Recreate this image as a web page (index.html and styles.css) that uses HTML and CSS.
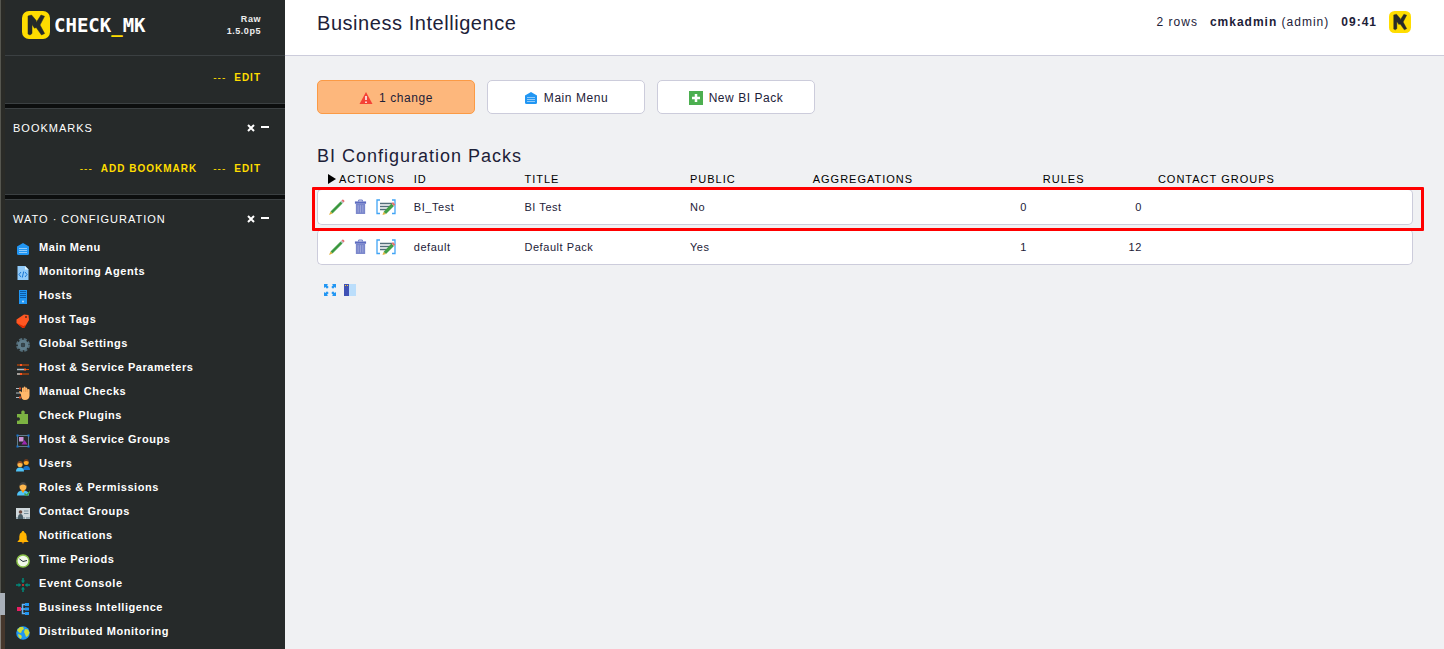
FILE: index.html
```html
<!DOCTYPE html>
<html lang="en">
<head>
<meta charset="utf-8">
<title>Business Intelligence</title>
<link rel="stylesheet" href="styles.css">
</head>
<body>
<svg class="defs" width="0" height="0" aria-hidden="true">
  <symbol id="logo" viewBox="0 0 28 28">
    <rect width="28" height="28" rx="7" fill="#ffdd00"/>
    <path d="M6 5 9.500 4 14.200 9.500V16.500L12.500 17.200 10 13.500V22.500L8 24 6 23zM19 4 22.500 5.300 18 14 22.600 22.500 19.500 24 14.200 16.500V11.500z" fill="#262a2a" stroke="#262a2a" stroke-width=".5" stroke-linejoin="round"/>
  </symbol>
  <symbol id="home" viewBox="0 0 14 14">
    <path d="M7 1 13 4.500V11.500Q13 13 11.500 13H2.500Q1 13 1 11.500V4.500z" fill="#2196f3"/>
    <path d="M3 6.500h8M3 8.500h8M3 10.500h8" stroke="#90caf9"/>
  </symbol>
  <symbol id="pencil" viewBox="0 0 16 16">
    <path d="M1.500 12.500 11.500 2.500 13.500 4.500 3.500 14.500z" fill="#43a047"/>
    <path d="M2.500 13.500 12.500 3.500" stroke="#388e3c"/>
    <path d="M11.500 2.500 12.500 1.500 14.500 3.500 13.500 4.500z" fill="#b0bec5"/>
    <path d="M12.500 1.500 13.500.5Q15.500.5 15.500 2.500L14.500 3.500z" fill="#e57373"/>
    <path d="M1.500 12.500 3.500 14.500 0 16z" fill="#e0b23c"/>
  </symbol>
  <symbol id="trash" viewBox="0 0 14 16">
    <path d="M5 2V.5h4V2" fill="none" stroke="#5c6bc0"/>
    <path d="M1 2h12v2.500H1z" fill="#5c6bc0"/>
    <path d="M2 4.500h10v11H2z" fill="#7986cb"/>
    <path d="M4.500 6v8M7 6v8M9.500 6v8" stroke="#9fa8da"/>
  </symbol>
  <symbol id="rules" viewBox="0 0 20 16">
    <path d="M4 1H1v13.500h3M16 1h3v13.500h-3" fill="none" stroke="#42a5f5" stroke-width="1.300"/>
    <path d="M4 4.500h12M4 7.500h11M4 10.500h8" stroke="#546e7a" stroke-width="1.600"/>
    <path d="M7.500 13 15.500 4.500 18 7 10 15z" fill="#43a047"/>
    <path d="M15.500 4.500 17 3 19.300 5.500 18 7z" fill="#e57373"/>
    <path d="M7.500 13 10 15 6.500 16z" fill="#e0b23c"/>
  </symbol>
</svg>

<div class="layout">
  <div class="edge"><span class="edge-top"></span><span class="edge-thumb"></span><span class="edge-bottom"></span></div>
  <aside class="sidebar">
    <header class="brand">
      <a class="brand-link" href="#"><svg class="logo-large" aria-hidden="true"><use href="#logo"/></svg><span>CHECK<b>_</b>MK</span></a>
      <div class="version">Raw<br>1.5.0p5</div>
    </header>
    <div class="snapins">
      <section class="snapin snapin-bare">
        <nav class="links"><a href="#">EDIT</a></nav>
      </section>
      <section class="snapin snapin-bookmarks">
        <header class="snapin-head"><h2>BOOKMARKS</h2>
          <button aria-label="Remove"><svg viewBox="0 0 8 8"><path d="M1 1 7 7M7 1 1 7"/></svg></button>
          <button aria-label="Collapse"><svg viewBox="0 0 8 8"><path d="M0 3h8"/></svg></button>
        </header>
        <nav class="links"><a href="#">ADD BOOKMARK</a><a href="#">EDIT</a></nav>
      </section>
      <section class="snapin snapin-wato">
        <header class="snapin-head"><h2>WATO · CONFIGURATION</h2>
          <button aria-label="Remove"><svg viewBox="0 0 8 8"><path d="M1 1 7 7M7 1 1 7"/></svg></button>
          <button aria-label="Collapse"><svg viewBox="0 0 8 8"><path d="M0 3h8"/></svg></button>
        </header>
        <nav class="menu">
          <a href="#"><svg viewBox="0 0 14 14"><use href="#home"/></svg>Main Menu</a>
          <a href="#"><svg viewBox="0 0 14 14"><path d="M1.500 0H9l3.500 3.500V14h-11z" fill="#90caf9"/><path d="M9 0v3.500h3.500z" fill="#e1f5fe"/><path d="M5 6 3 8.500 5 11M9 6l2 2.500L9 11M7.700 5.500 6.300 11.500" fill="none" stroke="#1976d2"/></svg>Monitoring Agents</a>
          <a href="#"><svg viewBox="0 0 14 14"><path d="M3 0h8v14H3z" fill="#2196f3"/><path d="M4 1.500h6M4 3.500h6M4 5.500h6M4 7.500h6" stroke="#0d5ba5"/><circle cx="7" cy="11.500" r="1" fill="#bbdefb"/></svg>Hosts</a>
          <a href="#"><svg viewBox="0 0 14 14"><path d="M.5 5.500 8 .5l4.500.5.500 5-4.500 7.500Q7 14.500 6 13.500L.5 9z" fill="#ff5722"/><path d="M.5 9 6 13.500q1 .8 2.500 0L10.500 10.500 7.500 12z" fill="#dd2c00"/><circle cx="10" cy="3" r="1" fill="#5d2a1a"/></svg>Host Tags</a>
          <a href="#"><svg viewBox="0 0 14 14"><circle cx="7" cy="7" r="5.700" fill="none" stroke="#546e7a" stroke-width="2.500" stroke-dasharray="3 1.480"/><circle cx="7" cy="7" r="3.700" fill="none" stroke="#607d8b" stroke-width="3"/><circle cx="7" cy="7" r="2" fill="#37474f"/></svg>Global Settings</a>
          <a href="#"><svg viewBox="0 0 14 14"><path d="M1 3h12M1 12h12" stroke="#e65100"/><path d="M1 7.500h7M1 12h3" stroke="#b0bec5" stroke-width="1.500"/><path d="M9 7.500h4" stroke="#e65100"/><path d="M4 2h2v2H4zM8 6.500h2v2H8zM4 11h2v2H4z" fill="#ff5722"/></svg>Host &amp; Service Parameters</a>
          <a href="#"><svg viewBox="0 0 14 14"><path d="M0 2.500h5M0 7h4M0 11.500h5" stroke="#b0bec5"/><path d="M3 1.500h2v2H3zM3 10.500h2v2H3z" fill="#dd4b20"/><path d="M5 8.500 3 6Q3.500 4.500 5 5.500L6 6.500V2q.8-1 1.700 0V1q.9-1 1.800 0v1q.9-1 1.700 0v1.500q1.500-.8 2.300 0V10q-.5 4-4.500 4T5 8.500z" fill="#ffb86b"/><path d="M7.700 2v4M9.500 2v4M11.200 3v3" stroke="#d98b45" stroke-width=".5"/></svg>Manual Checks</a>
          <a href="#"><svg viewBox="0 0 14 14"><path d="M1 4h4.500Q4.500.5 7 .5T8.500 4H12v10H1v-3.500q3 .8 3-1.500T1 7.500z" fill="#7cb342"/></svg>Check Plugins</a>
          <a href="#"><svg viewBox="0 0 14 14"><path d="M1.500 1.500h11v11h-11z" fill="none" stroke="#607d8b"/><path d="M3 3h4.500v4.500H3z" fill="#ce93d8"/><path d="M5.500 10.500 8.500 6l3 4.500z" fill="#9c27b0"/><path d="M.5.5h2v2h-2zM11.500.5h2v2h-2zM.5 11.500h2v2h-2zM11.500 11.500h2v2h-2z" fill="#1976d2"/></svg>Host &amp; Service Groups</a>
          <a href="#"><svg viewBox="0 0 14 14"><path d="M7 12q0-4 3.500-4t3.500 4z" fill="#1976d2"/><circle cx="10.200" cy="4.500" r="2.500" fill="#ffa726"/><path d="M7.700 4q0-3 2.500-3t2.500 3q-2.500-2-5 0z" fill="#6d3b1f"/><path d="M0 13.500Q0 9.500 4 9.500t4 4z" fill="#4fc3f7"/><circle cx="4" cy="6.500" r="2.600" fill="#ffb74d"/><path d="M1.400 6q0-3 2.600-3t2.600 3Q4 4 1.400 6z" fill="#8d4b24"/></svg>Users</a>
          <a href="#"><svg viewBox="0 0 14 14"><path d="M1 13.500q0-5 6-5t6 5z" fill="#4fc3f7"/><path d="M5 8h4l-2 3z" fill="#ff9800"/><circle cx="7" cy="4.800" r="3.500" fill="#ffb74d"/><path d="M3.500 4.500q0-4.500 3.500-4.500t3.500 4.500q-1-2-3.500-2t-3.500 2z" fill="#424242"/><path d="m8.500 11.500 2 2 3.500-4" fill="none" stroke="#43a047" stroke-width="1.500"/></svg>Roles &amp; Permissions</a>
          <a href="#"><svg viewBox="0 0 14 14"><path d="M0 2h14v11H0z" fill="#cfd8dc"/><path d="M2 11.500q0-3.500 2.500-3.500T7 11.500V13H2z" fill="#455a64"/><circle cx="4.500" cy="6" r="1.800" fill="#6d4c41"/><path d="M8 5h4.500M8 7.500h4.500" stroke="#78909c"/><path d="M1 13v-2M8 13v-2M11 13v-2M13 13v-2" stroke="#607d8b"/></svg>Contact Groups</a>
          <a href="#"><svg viewBox="0 0 14 14"><path d="M7 1q1.300 0 1.300 1.300Q10.700 3.300 10.700 6.500v3l2 2.500H1.300l2-2.500v-3q0-3.200 2.400-4.200Q5.700 1 7 1z" fill="#ffb300"/><path d="M5.500 12.300h3q-1.500 2.500-3 0z" fill="#ff8f00"/></svg>Notifications</a>
          <a href="#"><svg viewBox="0 0 14 14"><circle cx="7" cy="7" r="6.100" fill="#f1f8e9" stroke="#8bc34a" stroke-width="1.500"/><path d="M3.500 5 7 7.500l4-1" fill="none" stroke="#263238"/></svg>Time Periods</a>
          <a href="#"><svg viewBox="0 0 14 14"><path d="M7 0v4M7 10v4M0 7h4M10 7h4" stroke="#00897b" stroke-width="1.500"/><path d="m5 2.500 2 3 2-3zM5 11.500l2-3 2 3zM2.500 5l3 2-3 2zM11.500 5l-3 2 3 2z" fill="#00897b"/><circle cx="7" cy="7" r="1" fill="#e53935"/></svg>Event Console</a>
          <a href="#"><svg viewBox="0 0 14 14"><path d="M4 7h6M9.500 2.500H6.500v9h3" fill="none" stroke="#64b5f6" stroke-width="1.500"/><path d="M1 5h4v4H1z" fill="#e91e63"/><path d="M9 1h4v3H9zM9 5.500h4v3H9zM9 10h4v3H9z" fill="#2196f3"/></svg>Business Intelligence</a>
          <a href="#"><svg viewBox="0 0 14 14"><circle cx="7" cy="7" r="6.800" fill="#2196f3"/><path d="M1 4 4 1l3 0 1 2-2 1.500L5 7 3 6.500zM2 8l3 1 1 2-1.500 2Q2 11.500 2 8zM9 3l3 .5 1.500 3L12 10l-2 1-1-3-1-2z" fill="#cddc39"/></svg>Distributed Monitoring</a>
        </nav>
      </section>
    </div>
  </aside>

  <div class="page">
    <header class="topbar">
      <h1>Business Intelligence</h1>
      <div class="status"><span>2 rows</span><span><b>cmkadmin</b> (admin)</span><b>09:41</b><svg class="logo-small" aria-hidden="true"><use href="#logo"/></svg></div>
    </header>
    <main>
      <div class="actions">
        <button class="changes"><svg viewBox="0 0 14 14"><path d="M7 1 13.500 13H.5z" fill="#f44336"/><path d="M7 5v4M7 10.500V12" stroke="#fff" stroke-width="1.500"/></svg>1 change</button>
        <button><svg viewBox="0 0 14 14"><use href="#home"/></svg>Main Menu</button>
        <button><svg viewBox="0 0 14 14"><path d="M0 0h14v14H0z" fill="#4caf50"/><path d="M7 3v8M3 7h8" stroke="#fff" stroke-width="2.500"/></svg>New BI Pack</button>
      </div>
      <h2 class="table-title">BI Configuration Packs</h2>
      <table class="packs">
        <colgroup><col class="c-actions"><col class="c-id"><col class="c-title"><col class="c-public"><col class="c-aggr"><col class="c-rules"><col class="c-groups"></colgroup>
        <thead><tr><th><span class="fold"><svg viewBox="0 0 8 10"><path d="M0 0 8 5 0 10z"/></svg>ACTIONS</span></th><th>ID</th><th>TITLE</th><th>PUBLIC</th><th>AGGREGATIONS</th><th>RULES</th><th>CONTACT GROUPS</th></tr></thead>
        <tbody>
          <tr class="marked">
            <td><div class="tools"><a href="#" aria-label="Edit"><svg class="i-pencil"><use href="#pencil"/></svg></a><a href="#" aria-label="Delete"><svg class="i-trash"><use href="#trash"/></svg></a><a href="#" aria-label="Rules"><svg class="i-rules"><use href="#rules"/></svg></a></div></td>
            <td>BI_Test</td><td>BI Test</td><td>No</td><td class="num">0</td><td class="num">0</td><td></td>
          </tr>
          <tr>
            <td><div class="tools"><a href="#" aria-label="Edit"><svg class="i-pencil"><use href="#pencil"/></svg></a><a href="#" aria-label="Delete"><svg class="i-trash"><use href="#trash"/></svg></a><a href="#" aria-label="Rules"><svg class="i-rules"><use href="#rules"/></svg></a></div></td>
            <td>default</td><td>Default Pack</td><td>Yes</td><td class="num">1</td><td class="num">12</td><td></td>
          </tr>
        </tbody>
      </table>
      <footer class="view-tools">
        <button aria-label="Full screen"><svg viewBox="0 0 14 14"><path d="M1 1h4L4 2.300 5.700 4 4 5.700 2.300 4 1 5zM13 1v4L11.700 4 10 5.700 8.300 4 10 2.300 9 1zM1 13V9l1.300 1L4 8.300 5.700 10 4 11.700 5 13zM13 13H9l1-1.300L8.300 10 10 8.300 11.700 10 13 9z" fill="#2196f3"/></svg></button>
        <button aria-label="Toggle sidebar"><svg viewBox="0 0 14 14"><path d="M1 1h12v12H1z" fill="#bbdefb"/><path d="M1 1h5v12H1z" fill="#3f51b5"/><path d="M2 2h1v1H2zM4 2h1v1H4z" fill="#ffca28"/></svg></button>
      </footer>
    </main>
  </div>
</div>
</body>
</html>
```
FILE: styles.css
```css
* { box-sizing: border-box; }
body {
  margin: 0;
  background: #f0f1f3;
  color: #1d2138;
  font: 11px/16px "Liberation Sans", Arial, sans-serif;
  letter-spacing: 0.05em;
}
a { color: inherit; text-decoration: none; }
button { border: 0; padding: 0; background: none; font: inherit; letter-spacing: inherit; color: inherit; cursor: pointer; }
svg { display: block; flex: none; }
h1, h2 { margin: 0; font-weight: normal; }
.defs { position: absolute; }

.layout { display: flex; min-height: 100vh; }
.edge { display: flex; flex-direction: column; width: 5px; background: #2a2b27; }
.edge-top { flex: 593; border-left: 1px solid #55564f; }
.edge-thumb { flex: 22; background: #a9b0b9; }
.edge-bottom { flex: 34; background: #46372c; border-left: 1px solid #85807a; }

.sidebar { width: 280px; flex: none; background: #262a2a; color: #fff; }
.brand { display: flex; justify-content: space-between; align-items: center; height: 55px; padding: 0 24px 6px 17px; }
.brand-link { display: flex; align-items: center; gap: 4px; font: bold 19px/28px "DejaVu Sans Mono", monospace; letter-spacing: 0; }
.brand-link b { color: #ffdd00; }
.logo-large { width: 28px; height: 28px; }
.version { font-size: 9px; line-height: 12px; font-weight: bold; text-align: right; color: #eee; }
.snapins { display: flex; flex-direction: column; gap: 4px; background: #0c0e0e; }
.snapin { background: #262a2a; border: solid #3b4042; border-width: 1px 0; }
.snapin-bare { padding: 14px 0 17px; }
.snapin-bookmarks { padding: 11px 0 17px; }
.snapin-wato { padding: 11px 0 6px; border-bottom: 0; }
.snapin-head { display: flex; align-items: center; gap: 6px; padding: 0 16px 0 8px; }
.snapin-head h2 { flex: 1; font-size: 11px; line-height: 16px; letter-spacing: 1px; color: #fff; }
.snapin-head svg { width: 8px; height: 8px; fill: none; stroke: #fff; stroke-width: 2; }
.links { display: flex; justify-content: flex-end; gap: 16px; padding-right: 24px; font-size: 10px; font-weight: bold; letter-spacing: 1px; color: #ffdd00; }
.links a { display: flex; align-items: center; gap: 8px; }
.links a::before { content: "---"; font-weight: normal; }
.snapin-bookmarks .links { padding-top: 25px; }
.menu { padding-top: 8px; font-weight: bold; }
.menu a { display: flex; align-items: center; gap: 9px; height: 24px; padding-left: 11px; }
.menu svg { width: 14px; height: 14px; margin-top: 4px; }

.page { flex: 1; min-width: 0; }
.topbar { display: flex; justify-content: space-between; height: 56px; padding: 10px 33px 0 32px; background: #fff; border-bottom: 1px solid #ccccdb; }
h1 { font-size: 20px; line-height: 26px; }
.status { display: flex; align-items: center; gap: 12px; height: 24px; font-size: 12px; letter-spacing: 1px; }
.logo-small { width: 22px; height: 22px; }
main { padding: 24px 31px 24px 32px; }
.actions { display: flex; gap: 12px; }
.actions button { display: flex; align-items: center; justify-content: center; gap: 6px; width: 158px; height: 34px; padding-top: 1px; border: 1px solid #ccccdb; border-radius: 5px; background: #fff; font-size: 12px; }
.actions .changes { background: #fdb77c; border-color: #fb9a45; }
.actions svg { width: 14px; height: 14px; }
.table-title { margin-top: 30px; font-size: 18px; line-height: 24px; letter-spacing: 1px; }

.packs { width: 100%; table-layout: fixed; border-collapse: separate; border-spacing: 0 4px; }
.c-actions { width: 8.1%; }
.c-id { width: 10.1%; }
.c-title { width: 15.1%; }
.c-public { width: 11.2%; }
.c-aggr { width: 21%; }
.c-rules { width: 10.5%; }
.c-groups { width: 24%; }
th { padding: 1px 8px 0; height: 13px; line-height: 12px; font-weight: normal; text-align: left; letter-spacing: 1px; color: #000; white-space: nowrap; }
.fold { display: flex; align-items: center; gap: 3px; padding-left: 3px; }
.fold svg { width: 8px; height: 10px; }
td { height: 36px; padding: 0 8px; background: #fff; border: solid #ccccdb; border-width: 1px 0; }
td:first-child { border-left-width: 1px; border-radius: 5px 0 0 5px; padding-left: 11px; }
td:last-child { border-right-width: 1px; border-radius: 0 5px 5px 0; }
.num { text-align: right; }
.tools { display: flex; align-items: center; gap: 9px; }
.i-pencil { width: 16px; height: 16px; }
.i-trash { width: 13px; height: 16px; }
.i-rules { width: 20px; height: 16px; }
.marked { position: relative; }
.marked::after { content: ""; position: absolute; inset: -2px -11px -6px -5px; border: 3px solid #f00; border-radius: 1px; }
.view-tools { display: flex; gap: 6px; padding: 14px 6px; }
.view-tools svg { width: 14px; height: 14px; }
```
